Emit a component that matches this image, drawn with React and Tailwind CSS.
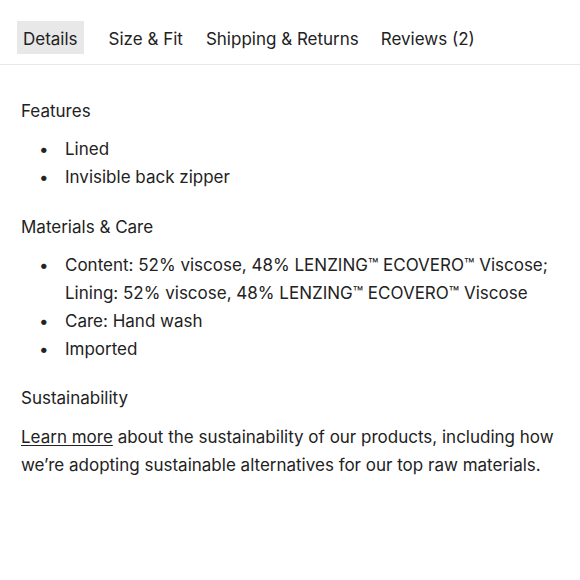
export default function App() {
  const tabs = [
    { label: "Details", gap: "ml-0" },
    { label: "Size & Fit", gap: "ml-[19px]" },
    { label: "Shipping & Returns", gap: "ml-[11px]" },
    { label: "Reviews (2)", gap: "ml-[10px]" },
  ];

  return (
    <div
      className="w-[580px] h-[580px] bg-white text-[#222] text-[17px]"
      style={{ fontFamily: "Inter, 'Noto Sans', sans-serif" }}
    >
      <div className="flex pl-[17px] pt-[21px] pb-[10px] border-b border-[#e8e8e8]">
        {tabs.map((t, i) => (
          <div
            key={t.label}
            className={
              "h-[33px] px-[6px] pt-[3px] flex items-center leading-none " +
              t.gap +
              (i === 0 ? " bg-[#e8e8e8]" : "")
            }
          >
            {t.label}
          </div>
        ))}
      </div>

      <div className="pl-[21px] pr-[20px] pt-[32px] leading-[28px]">
        <h3 className="mb-[10px]">Features</h3>
        <ul className="mb-[22px]">
          <Item>Lined</Item>
          <Item>Invisible back zipper</Item>
        </ul>

        <h3 className="mb-[10px]">Materials &amp; Care</h3>
        <ul className="mb-[21px]">
          <Item>
            Content: 52% viscose, 48% LENZING™ ECOVERO™ Viscose;
            <br />
            Lining: 52% viscose, 48% LENZING™ ECOVERO™ Viscose
          </Item>
          <Item>Care: Hand wash</Item>
          <Item>Imported</Item>
        </ul>

        <h3 className="mb-[11px]">Sustainability</h3>
        <p>
          <a href="#" className="underline underline-offset-2">
            Learn more
          </a>{" "}
          about the sustainability of our products, including how we’re
          adopting sustainable alternatives for our top raw materials.
        </p>
      </div>
    </div>
  );
}

function Item({ children }) {
  return (
    <li className="flex">
      <span className="w-[44px] pl-[18px] shrink-0">•</span>
      <span>{children}</span>
    </li>
  );
}
